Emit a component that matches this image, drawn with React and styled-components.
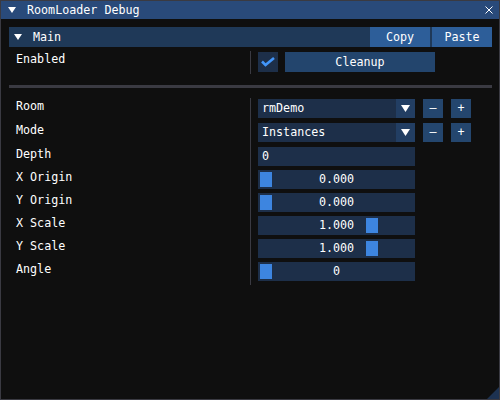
import React from 'react'
import styled, { createGlobalStyle } from 'styled-components'

const GlobalStyle = createGlobalStyle`
  html, body { margin: 0; padding: 0; background: #0f0f0f; }
  * { box-sizing: border-box; }
`

const Window = styled.div`
  position: relative;
  width: 500px;
  height: 400px;
  background: #0f0f0f;
  border: 1px solid #3a3a42;
  display: flex;
  flex-direction: column;
  font-family: "DejaVu Sans Mono", "Liberation Mono", monospace;
  font-size: 11.7px;
  color: #fff;
  overflow: hidden;
`

const TitleBar = styled.div`
  height: 18px;
  background: #294a7a;
  display: flex;
  align-items: center;
  padding: 0 6px 0 7px;
`

const TitleText = styled.span`
  margin-left: 11px;
  line-height: 13px;
  padding-top: 1px;
`

const CloseBox = styled.div`
  margin-left: auto;
  width: 8px;
  height: 8px;
  display: flex;
`

const Body = styled.div`
  padding: 8px 7px 0 8px;
  display: flex;
  flex-direction: column;
`

const Header = styled.div`
  height: 20px;
  background: #1f3958;
  display: flex;
  align-items: center;
  padding-left: 5px;
`

const HeaderTitle = styled.span`
  margin-left: 11px;
  line-height: 13px;
`

const HeaderButtons = styled.div`
  margin-left: auto;
  display: flex;
  gap: 2px;
  height: 100%;
`

const Button = styled.div`
  width: ${p => p.$w}px;
  height: ${p => p.$h || 20}px;
  background: ${p => p.$bg || '#23456d'};
  display: flex;
  align-items: center;
  justify-content: center;
  line-height: 13px;
`

const Section = styled.div`
  display: flex;
  flex-direction: column;
  margin-top: ${p => p.$top || 0}px;
`

const Row = styled.div`
  display: grid;
  grid-template-columns: 241px 1fr;
  height: ${p => p.$h || 23}px;
`

const Label = styled.div`
  padding: 2px 0 0 7px;
  line-height: 13px;
`

const Cell = styled.div`
  border-left: 1px solid #3a3a42;
  padding: 1px 0 0 7px;
  display: flex;
  align-items: flex-start;
  gap: ${p => p.$gap || 8}px;
`

const Separator = styled.div`
  height: 3px;
  background: #3a3a42;
  margin: 11px 0 10px 0;
`

const Frame = styled.div`
  position: relative;
  width: 157px;
  height: 19px;
  background: #1d2f49;
  line-height: 19px;
  padding-left: 4px;
  display: flex;
  white-space: pre;
`

const ComboText = styled.span`
  flex: 1;
`

const ComboArrow = styled.div`
  width: 19px;
  height: 19px;
  background: #223e63;
  display: flex;
  align-items: center;
  justify-content: center;
`

const SliderValue = styled.span`
  flex: 1;
  text-align: center;
  margin-left: -4px;
  position: relative;
`

const Grab = styled.div`
  position: absolute;
  top: 2px;
  width: 12px;
  height: 15px;
  background: #3d85e0;
`

const CheckBox = styled.div`
  width: 20px;
  height: 20px;
  background: #1d2f49;
  display: flex;
  align-items: center;
  justify-content: center;
`

const ResizeGrip = styled.div`
  position: absolute;
  right: 0;
  bottom: 0;
  width: 12px;
  height: 12px;
  background: #1d3251;
  clip-path: polygon(100% 0, 100% 100%, 0 100%);
`

const DownTriangle = ({ w = 8, h = 6 }) => (
  <svg width={w} height={h} viewBox={`0 0 ${w} ${h}`}>
    <polygon points={`0,0 ${w},0 ${w / 2},${h}`} fill="#fff" />
  </svg>
)

const Slider = ({ value, frac }) => (
  <Frame>
    <Grab style={{ left: 2 + frac * 141 }} />
    <SliderValue>{value}</SliderValue>
  </Frame>
)

const Combo = ({ value }) => (
  <>
    <Frame style={{ paddingRight: 0 }}>
      <ComboText>{value}</ComboText>
      <ComboArrow><DownTriangle w={9} h={7} /></ComboArrow>
    </Frame>
    <Button $w={20} $h={19} $bg="#24466e">–</Button>
    <Button $w={20} $h={19} $bg="#24466e">+</Button>
  </>
)

const sliders = [
  { label: 'X Origin', value: '0.000', frac: 0 },
  { label: 'Y Origin', value: '0.000', frac: 0 },
  { label: 'X Scale', value: '1.000', frac: 0.75 },
  { label: 'Y Scale', value: '1.000', frac: 0.75 },
  { label: 'Angle', value: '0', frac: 0 },
]

export default function App() {
  return (
    <>
      <GlobalStyle />
      <Window>
        <TitleBar>
          <DownTriangle w={8} h={6} />
          <TitleText>RoomLoader Debug</TitleText>
          <CloseBox>
            <svg width="8" height="8" viewBox="0 0 8 8">
              <path d="M0.5 0.5 L7.5 7.5 M7.5 0.5 L0.5 7.5" stroke="#fff" strokeWidth="1" />
            </svg>
          </CloseBox>
        </TitleBar>
        <Body>
          <Header>
            <DownTriangle w={8} h={6} />
            <HeaderTitle>Main</HeaderTitle>
            <HeaderButtons>
              <Button $w={60} $bg="#2d5e99">Copy</Button>
              <Button $w={60} $bg="#2d5e99">Paste</Button>
            </HeaderButtons>
          </Header>
          <Section $top={4}>
            <Row>
              <Label>Enabled</Label>
              <Cell $gap={7}>
                <CheckBox>
                  <svg width="14" height="10" viewBox="0 0 14 10">
                    <polyline points="1,4.5 4.5,8 13,1" fill="none" stroke="#4296fa" strokeWidth="2.6" />
                  </svg>
                </CheckBox>
                <Button $w={150}>Cleanup</Button>
              </Cell>
            </Row>
          </Section>
          <Separator />
          <Section>
            <Row $h={24}>
              <Label>Room</Label>
              <Cell><Combo value="rmDemo" /></Cell>
            </Row>
            <Row $h={24}>
              <Label>Mode</Label>
              <Cell><Combo value="Instances" /></Cell>
            </Row>
            <Row>
              <Label>Depth</Label>
              <Cell><Frame>0</Frame></Cell>
            </Row>
            {sliders.map((s, i) => (
              <Row key={s.label} $h={i === sliders.length - 1 ? 24 : 23}>
                <Label>{s.label}</Label>
                <Cell><Slider value={s.value} frac={s.frac} /></Cell>
              </Row>
            ))}
          </Section>
        </Body>
        <ResizeGrip />
      </Window>
    </>
  )
}
